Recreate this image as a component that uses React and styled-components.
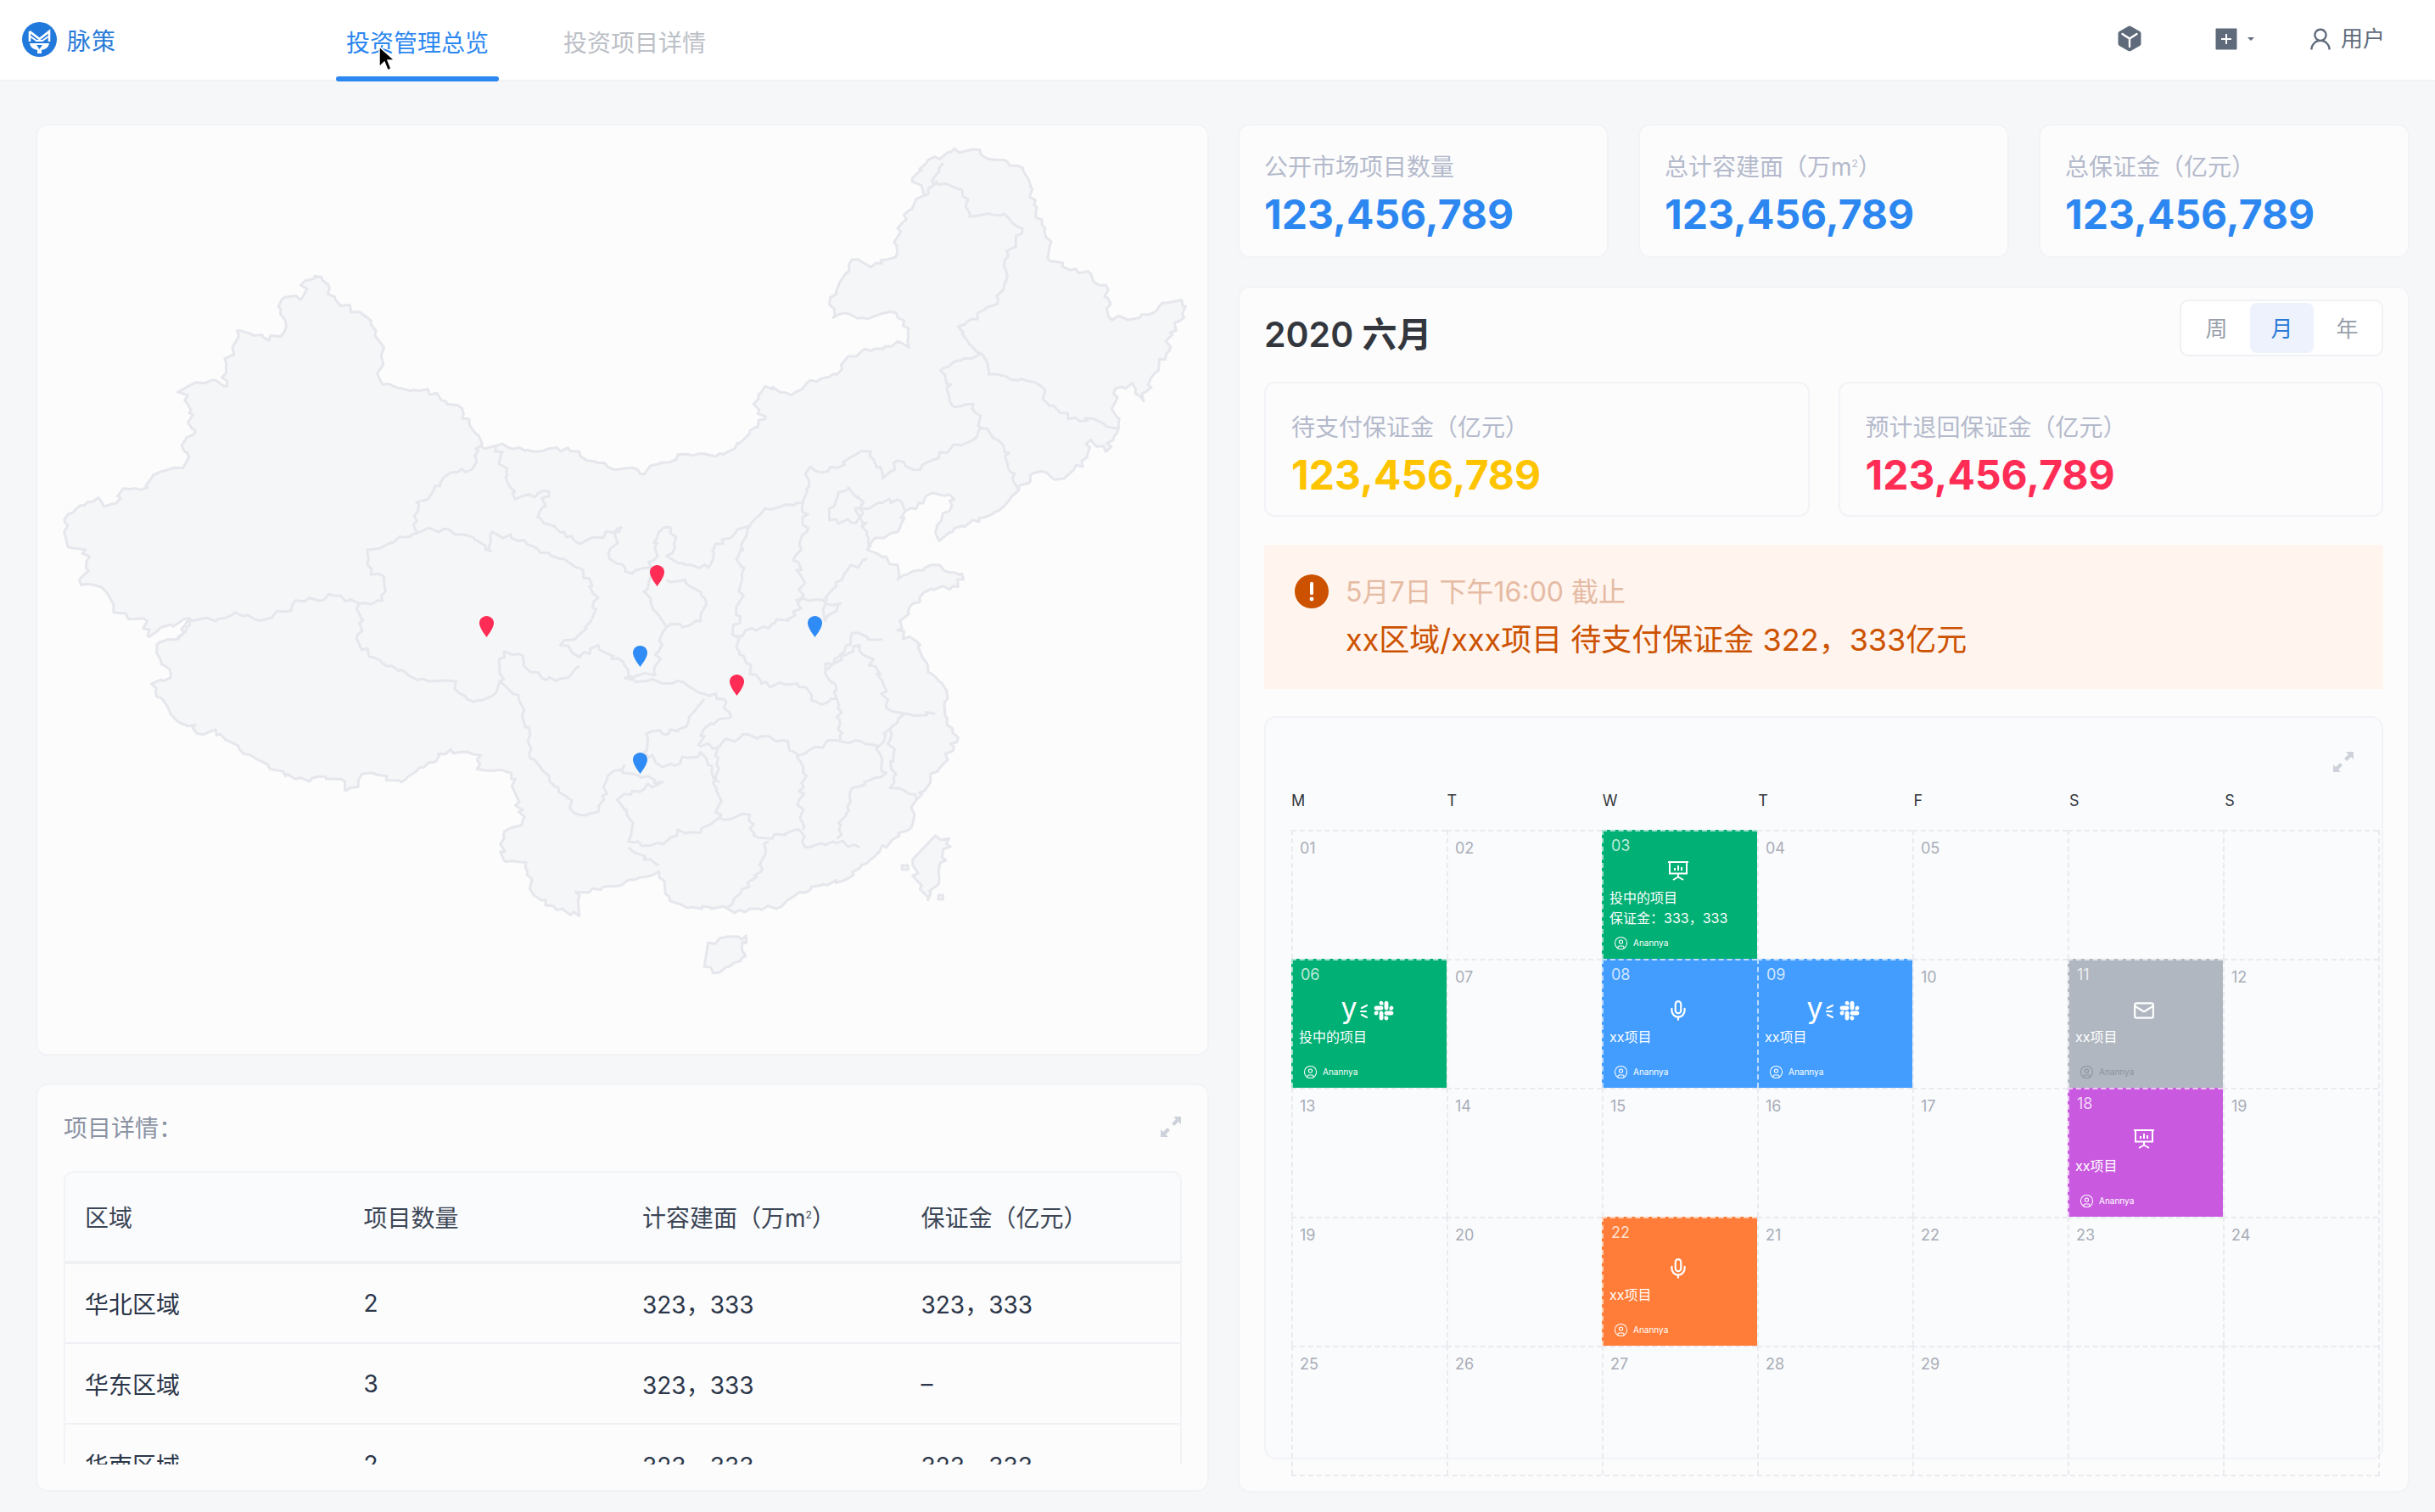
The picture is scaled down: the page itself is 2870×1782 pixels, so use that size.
import { createGlobalStyle } from "styled-components";
import styled from "styled-components";
import { Mic, Mail, CircleUser } from "lucide-react";
import { FaSlack } from "react-icons/fa";
import { AiOutlineUser, AiFillPlusSquare } from "react-icons/ai";

const GlobalStyle = createGlobalStyle`
    html, body {
        margin: 0;
        padding: 0;
        background: #f6f7f9;
        font-family: Inter, "Noto Sans CJK SC", sans-serif;
    }
    * {
        box-sizing: border-box;
    }
`;

const Page = styled.div`
    width: 2870px;
    height: 1782px;
    position: relative;
    overflow: hidden;
    background: #f6f7f9;
`;

const Nav = styled.header`
    height: 94px;
    display: flex;
    align-items: center;
    background: #fff;
    box-shadow: 0 1px 3px rgba(30, 40, 60, 0.04);
    padding-left: 26px;
    padding-right: 59px;
`;

const Brand = styled.div`
    display: flex;
    align-items: center;
    gap: 12px;
    width: 370px;
    margin-top: -1px;
    color: #2a7bd8;
    font-size: 28px;
    letter-spacing: 1px;
`;

const Tabs = styled.nav`
    display: flex;
    gap: 64px;
    height: 94px;
`;

const Tab = styled.div`
    width: 192px;
    position: relative;
    display: flex;
    align-items: center;
    justify-content: center;
    padding-top: 4px;
    font-size: 28px;
    color: ${(p) => (p.$active ? "#2d87f0" : "#bcc0c7")};
    &::after {
        content: "";
        display: ${(p) => (p.$active ? "block" : "none")};
        position: absolute;
        left: 0;
        right: 0;
        bottom: -2px;
        height: 6px;
        border-radius: 3px;
        background: #2d87f0;
    }
`;

const NavRight = styled.div`
    margin-left: auto;
    margin-top: -3px;
    display: flex;
    align-items: center;
    color: #5f6b7a;
`;

const CubeBox = styled.div`
    display: flex;
    margin-right: 84px;
`;

const AddBox = styled.div`
    display: flex;
    align-items: center;
    gap: 9px;
    margin-right: 62px;
`;

const Caret = styled.span`
    width: 0;
    height: 0;
    border-left: 4px solid transparent;
    border-right: 4px solid transparent;
    border-top: 4px solid #5f6b7a;
`;

const UserBox = styled.div`
    display: flex;
    align-items: center;
    gap: 8px;
    font-size: 26px;
    line-height: 30px;
`;

const Main = styled.main`
    display: grid;
    grid-template-columns: 1383px 1381px;
    gap: 34px;
    padding: 52px 0 0 42px;
`;

const Column = styled.div`
    display: flex;
    flex-direction: column;
    gap: 33px;
`;

const Panel = styled.section`
    background: #fcfcfd;
    border: 2px solid #f2f3f6;
    border-radius: 14px;
`;

const MapPanel = styled(Panel)`
    height: 1098px;
    position: relative;
`;

const MapDrawing = styled.svg`
    display: block;
    position: absolute;
    left: -4px;
    top: 2px;
    width: 1400px;
    height: 1100px;
`;

const PinMark = styled.svg`
    position: absolute;
    width: 17px;
    height: 25px;
    left: ${(p) => p.$x - 42 - 10}px;
    top: ${(p) => p.$y - 146 - 14}px;
    fill: ${(p) => (p.$red ? "#ff2d55" : "#2f8bf5")};
`;

const DetailPanel = styled(Panel)`
    height: 481px;
    padding: 0 30px 0 31px;
`;

const DetailHead = styled.div`
    height: 101px;
    display: flex;
    align-items: center;
    justify-content: space-between;
    padding-bottom: 3px;
    font-size: 28px;
    color: #8b93a3;
`;

const TableClip = styled.div`
    height: 346px;
    overflow: hidden;
    border: 2px solid #f2f3f6;
    border-bottom: 0;
    border-radius: 12px 12px 0 0;
`;

const Table = styled.table`
    width: 100%;
    border-collapse: collapse;
    table-layout: fixed;
    font-size: 28px;
`;

const HeadCell = styled.th`
    height: 106px;
    padding: 0 0 0 23px;
    text-align: left;
    font-weight: 400;
    color: #3c4656;
    background: #fafbfc;
    border-bottom: 4px solid #eff0f3;
`;

const BodyCell = styled.td`
    height: 95px;
    padding: 0 0 0 23px;
    color: #2b3648;
    border-bottom: 2px solid #eff0f3;
`;

const Sup = styled.sup`
    font-size: 12px;
    line-height: 0;
`;

const KpiRow = styled.div`
    display: grid;
    grid-template-columns: repeat(3, 1fr);
    gap: 35px;
`;

const KpiCard = styled(Panel)`
    height: 158px;
    padding: 28px 29px 0;
`;

const KpiLabel = styled.div`
    font-size: 28px;
    line-height: 42px;
    color: #b4bacb;
`;

const KpiValue = styled.div`
    font-size: 48px;
    line-height: 60px;
    font-weight: 700;
    margin-top: 5px;
    color: ${(p) => p.$color};
`;

const CalendarPanel = styled(Panel)`
    height: 1422px;
    padding: 13px 29px 0 29px;
`;

const CalendarHead = styled.div`
    display: flex;
    align-items: center;
    justify-content: space-between;
    height: 68px;
`;

const CalendarTitle = styled.h2`
    margin: 10px 0 0;
    font-size: 41px;
    font-weight: 600;
    color: #33373d;
`;

const Segment = styled.div`
    display: flex;
    align-items: center;
    gap: 2px;
    height: 67px;
    padding: 0 3px 0 4px;
    border: 2px solid #f0f1f5;
    border-radius: 10px;
    background: #fff;
`;

const SegmentItem = styled.div`
    width: 75px;
    height: 59px;
    display: flex;
    align-items: center;
    justify-content: center;
    padding-bottom: 2px;
    border-radius: 8px;
    font-size: 26px;
    background: ${(p) => (p.$active ? "#eef2fc" : "transparent")};
    color: ${(p) => (p.$active ? "#2a7bd8" : "#9aa0ab")};
`;

const StatRow = styled.div`
    display: grid;
    grid-template-columns: 1fr 1fr;
    gap: 34px;
    margin-top: 30px;
`;

const StatCard = styled.div`
    height: 159px;
    padding: 31px 30px 0;
    border: 2px solid #f2f3f6;
    border-radius: 12px;
`;

const Alert = styled.div`
    height: 170px;
    margin-top: 33px;
    padding: 35px 36px 0;
    display: grid;
    grid-template-columns: 40px 1fr;
    grid-template-rows: 42px 1fr;
    column-gap: 20px;
    background: #fff4ee;
`;

const AlertTime = styled.div`
    font-size: 32px;
    line-height: 42px;
    color: #e5bba3;
`;

const AlertText = styled.div`
    grid-column: 2;
    margin-top: -1px;
    padding-top: 11px;
    font-size: 36px;
    line-height: 50px;
    color: #cc5200;
`;

const CalendarBox = styled.div`
    height: 876px;
    margin-top: 32px;
    padding: 39px 0 0 30px;
    background: #fafbfc;
    border: 2px solid #f2f3f6;
    border-radius: 14px;
`;

const CalendarTools = styled.div`
    display: flex;
    justify-content: flex-end;
    padding-right: 32px;
    height: 26px;
`;

const WeekRow = styled.div`
    display: grid;
    grid-template-columns: repeat(7, 183.4px);
    margin-top: 22px;
    font-size: 18px;
    line-height: 22px;
    color: #33373d;
`;

const DayGrid = styled.div`
    display: grid;
    grid-template-columns: repeat(7, 183px);
    grid-auto-rows: 152px;
    width: 1283px;
    margin-top: 23px;
    border-right: 2px dashed #e9ebf0;
    border-bottom: 2px dashed #e9ebf0;
`;

const Day = styled.div`
    position: relative;
    padding: 8px 8px 0;
    font-size: 18px;
    line-height: 24px;
    color: #a8adb8;
    border-top: 2px dashed #e9ebf0;
    border-left: 2px dashed #e9ebf0;
`;

const Tile = styled.div`
    display: flex;
    flex-direction: column;
    padding: 5px 0 0;
    color: #fff;
    font-size: 16px;
    background: ${(p) => p.$bg};
    border-top: 2px dashed rgba(255, 255, 255, 0.65);
    border-left: 2px dashed rgba(255, 255, 255, 0.65);
`;

const TileDate = styled.div`
    padding-left: 9px;
    font-size: 18px;
    line-height: 24px;
    color: rgba(255, 255, 255, 0.75);
`;

const TileBody = styled.div`
    flex: 1;
    display: flex;
    flex-direction: column;
    justify-content: center;
`;

const TileIcons = styled.div`
    height: 26px;
    display: flex;
    align-items: center;
    justify-content: center;
    gap: 6px;
    margin-bottom: 6px;
    margin-right: 5px;
`;

const TileLine = styled.div`
    padding-left: 7px;
    line-height: 24px;
    white-space: nowrap;
`;

const TileFoot = styled.div`
    height: 26px;
    margin-bottom: 6px;
    padding-left: 12px;
    display: flex;
    align-items: center;
    gap: 6px;
    font-size: 10px;
    color: ${(p) => (p.$dim ? "#8d939c" : "#fff")};
`;

const YLetter = styled.span`
    font-size: 34px;
    line-height: 26px;
    font-weight: 400;
    margin-top: -6px;
`;

const YammerMark = styled.span`
    display: flex;
    align-items: center;
`;

const Cursor = styled.svg`
    position: absolute;
    left: 445px;
    top: 54px;
    width: 22px;
    height: 32px;
`;

// map data: points traced off the picture, viewBox units
const outline = "40,680 45,650 70,630 85,622 92,637 108,632 118,607 150,605 155,590 185,572 200,565 200,525 212,515 205,480 203,450 190,445 225,430 240,425 255,435 248,420 262,370 268,342 290,350 310,358 330,345 327,290 355,285 358,258 380,252 388,280 405,300 430,310 445,325 450,350 462,370 455,410 460,432 480,438 520,440 545,465 565,472 575,500 590,535 610,535 660,545 690,538 720,545 730,560 770,575 790,572 800,582 850,550 905,548 925,540 945,510 965,490 950,465 965,435 1000,450 1025,425 1060,415 1075,385 1110,372 1145,362 1155,370 1155,338 1130,310 1100,322 1070,312 1055,320 1050,298 1060,280 1080,222 1105,235 1140,210 1140,170 1165,120 1175,115 1160,85 1180,55 1210,42 1240,37 1270,55 1300,65 1315,100 1320,130 1335,170 1342,225 1375,238 1415,265 1420,320 1460,320 1490,295 1515,290 1518,320 1500,345 1495,380 1475,420 1465,460 1450,430 1425,448 1432,505 1415,545 1395,525 1390,555 1360,590 1330,578 1300,610 1265,650 1225,670 1195,695 1190,680 1215,625 1190,615 1150,645 1140,680 1110,690 1100,710 1120,722 1140,735 1140,760 1185,735 1225,750 1220,772 1185,775 1160,800 1140,845 1170,870 1180,915 1205,950 1205,1000 1220,1025 1200,1070 1165,1130 1155,1180 1110,1225 1090,1245 1070,1265 1010,1285 985,1310 925,1320 905,1310 870,1310 840,1300 825,1250 800,1260 760,1275 715,1285 720,1325 690,1315 660,1290 650,1235 620,1230 620,1190 645,1165 630,1085 612,1080 585,1078 590,1055 550,1045 515,1075 485,1100 440,1085 412,1115 405,1095 345,1095 300,1065 275,1050 240,1012 225,1020 180,985 155,935 180,925 162,870 190,860 205,825 150,855 145,825 105,815 95,780 60,760 72,745 68,710 45,705";

const islands = [
    "1190,1190 1208,1195 1195,1260 1180,1298 1165,1265 1160,1230",
    "890,1370 940,1358 935,1395 905,1420 885,1410",
    "1050,640 1075,605 1095,630 1085,665 1050,660",
    "1146,1240 1154,1240 1154,1247 1146,1247",
    "1194,1290 1200,1290 1200,1297 1194,1297",
];

const borders = [
    "190,860 205,825 240,830 265,815 295,828 340,812 345,795 395,787 430,800 460,795 462,765 440,735 440,710 510,680 540,675 570,685 603,712 605,680 640,695 680,715 720,740 745,790 735,830 715,860 695,870 720,890 745,870 780,905 790,925",
    "590,535 583,540 578,575 550,580 520,625 505,630 505,680",
    "610,535 625,585 635,625 680,612 665,655 700,680 720,700 775,672 760,725 790,750 815,740 825,680 840,672 845,700 835,720 860,735 890,740 900,700 945,670 930,720 935,760 930,800 925,855 940,900 960,935 1010,940 1040,970 1060,960 1045,910 1070,880 1080,850 1120,860",
    "945,670 965,640 1015,630 1025,570 1040,580 1085,550 1105,545 1120,590 1140,560 1160,575 1210,540 1245,520 1250,505 1280,535 1300,610",
    "1175,115 1200,60",
    "1190,90 1225,105 1235,150 1280,145 1305,170 1285,210 1285,250 1265,300 1220,335 1235,365 1250,380 1200,405 1215,470 1240,465 1250,505",
    "1250,380 1260,415 1300,425 1330,435 1335,460 1365,490 1400,490 1432,505",
    "1015,630 1020,680 1005,720 1015,770 1005,820 925,855",
    "1005,795 1045,800 1065,800 1045,830 1045,790 1070,750 1100,725",
    "1100,710 1100,680 1085,640 1140,625 1150,645",
    "815,740 805,780 830,830 835,840 880,830 885,790 860,760 835,760",
    "835,840 825,880 820,920 780,925 810,930 850,930 880,950 910,960 920,990 885,1010 880,1040 905,1040",
    "620,880 640,885 655,915 690,930 720,905",
    "615,930 640,960 655,1020 655,1060 680,1090 720,1155 745,1150 755,1100 780,1070",
    "430,800 430,870 465,905 520,930 550,930 580,965 610,950 615,930 620,880",
    "775,1080 810,1090 830,1100 790,1115 770,1130 790,1175 785,1200 830,1205 850,1180 880,1185 905,1160 945,1155 950,1190 975,1195 1010,1180 1020,1210 1055,1200 1090,1210",
    "805,1050 815,1015 850,1015 865,990 885,960",
    "805,1050 830,1075 880,1050 895,1085 905,1100",
    "905,1040 935,1020 990,1030 1010,1055 1060,1030 1085,1030 1115,1040 1130,1010 1150,985",
    "905,1040 900,1090 905,1160",
    "1010,1055 1020,1090 1010,1130 1015,1180",
    "1115,1040 1125,1085 1080,1110 1060,1195",
    "1130,1010 1135,1090 1130,1110 1150,1115 1165,1130",
    "1045,910 1090,870 1120,930 1125,975 1150,985 1190,985",
    "1060,960 1065,1030",
    "970,1200 960,1250 935,1280 915,1310",
    "785,1210 825,1240",
];

// breaks each straight stretch into small jogs so the lines read like a real border
function roughen(text) {
    const pts = text.split(" ").map((p) => p.split(",").map(Number));
    let seed = pts.length * 7 + 3;
    const next = () => {
        seed = (seed * 16807) % 2147483647;
        return (seed % 1000) / 1000 - 0.5;
    };
    const out = [];
    pts.forEach((p, i) => {
        out.push(p);
        const q = pts[i + 1];
        if (!q) return;
        const len = Math.hypot(q[0] - p[0], q[1] - p[1]);
        const steps = Math.floor(len / 7);
        for (let s = 1; s < steps; s++) {
            const t = s / steps;
            out.push([p[0] + (q[0] - p[0]) * t + next() * 10, p[1] + (q[1] - p[1]) * t + next() * 10]);
        }
    });
    return out.map((p) => `${p[0].toFixed(1)},${p[1].toFixed(1)}`).join(" ");
}

const pins = [
    { x: 573, y: 738, red: true },
    { x: 774, y: 678, red: true },
    { x: 868, y: 807, red: true },
    { x: 960, y: 738 },
    { x: 754, y: 773 },
    { x: 754, y: 899 },
];

function ChinaMap() {
    return (
        <MapDrawing viewBox="0 0 1568 1568" preserveAspectRatio="none">
            <g fill="#f5f6f8" stroke="#e6e7ec" strokeWidth="3" strokeLinejoin="round">
                <polygon points={roughen(outline)} vectorEffect="non-scaling-stroke" />
                {islands.map((p) => (
                    <polygon key={p} points={roughen(p)} vectorEffect="non-scaling-stroke" />
                ))}
            </g>
            <g fill="none" stroke="#e6e7ec" strokeWidth="3" strokeLinejoin="round">
                {borders.map((p) => (
                    <polyline key={p} points={roughen(p)} vectorEffect="non-scaling-stroke" />
                ))}
            </g>
        </MapDrawing>
    );
}

function Pin({ x, y, red }) {
    return (
        <PinMark $x={x} $y={y} $red={red} viewBox="0 0 17 25">
            <path d="M8.5 0C13.2 0 17 3.6 17 8.3c0 5-5 12-8.5 16.7C5 20.3 0 13.3 0 8.3 0 3.6 3.8 0 8.5 0z" />
        </PinMark>
    );
}

function Logo() {
    return (
        <svg width="41" height="41" viewBox="0 0 41 41">
            <circle cx="20.5" cy="20.5" r="20.5" fill="#2279dc" />
            <path d="M9 11l11.500 9L32 11v12" fill="none" stroke="#fff" strokeWidth="2.600" />
            <path d="M9 11v12" fill="none" stroke="#fff" strokeWidth="2.600" />
            <path d="M10 17l7 5h7l7-5" fill="none" stroke="#fff" strokeWidth="2" />
            <path d="M9 25h23c-1 5-4 7-9 8v4h-5v-4c-5-1-8-3-9-8z" fill="#fff" />
            <path d="M17 27h7l-3.500 5z" fill="#2279dc" />
        </svg>
    );
}

function CubeIcon() {
    return (
        <svg width="28" height="31" viewBox="0 0 28 31">
            <path d="M12.5 1a3 3 0 0 1 3 0l10.500 6a3 3 0 0 1 1.500 2.600v11.800a3 3 0 0 1-1.500 2.600l-10.500 6a3 3 0 0 1-3 0l-10.500-6a3 3 0 0 1-1.500-2.600V9.600a3 3 0 0 1 1.500-2.600z" fill="#5f6b7a" />
            <path d="M5.500 10l8.500 5.500 8.500-5.500M14 15.500V25" fill="none" stroke="#fff" strokeWidth="2.400" strokeLinecap="round" />
        </svg>
    );
}

function ExpandIcon() {
    return (
        <svg width="26" height="26" viewBox="0 0 26 26" fill="#cdd2da">
            <path d="M16 1h9v9l-3-3-5 5-3-3 5-5zM10 25H1v-9l3 3 5-5 3 3-5 5z" />
        </svg>
    );
}

function AlertIcon() {
    return (
        <svg width="40" height="40" viewBox="0 0 40 40">
            <circle cx="20" cy="20" r="20" fill="#cc5200" />
            <rect x="18" y="9" width="4" height="15" rx="1.500" fill="#fff" />
            <circle cx="20" cy="29" r="2.400" fill="#fff" />
        </svg>
    );
}

function BoardIcon() {
    return (
        <svg width="24" height="25" viewBox="0 0 24 25" fill="none" stroke="#fff">
            <path d="M0 2h24" strokeWidth="2" />
            <path d="M2 2v13.500h20V2" strokeWidth="2" />
            <path d="M8 12V9M12 12V6M16 12V8" strokeWidth="2" />
            <path d="M12 16v4M12 19.500l-6 3.500M12 19.500l6 3.500" strokeWidth="2" />
        </svg>
    );
}

function YammerIcon() {
    return (
        <YammerMark>
            <YLetter>y</YLetter>
            <svg width="12" height="22" viewBox="0 0 12 22" fill="none" stroke="#fff" strokeWidth="2.200" strokeLinecap="round">
                <path d="M5 8l6-3M4 12h6M5 16l6 3" />
            </svg>
        </YammerMark>
    );
}

const tileColors = {
    green: "#00b074",
    blue: "#429dff",
    grey: "#b0b7c0",
    purple: "#c95ae0",
    orange: "#ff7d38",
};

const weeks = [
    [
        { day: "01" }, { day: "02" },
        { day: "03", color: "green", icon: "board", lines: ["投中的项目", "保证金：333，333"] },
        { day: "04" }, { day: "05" }, { day: "" }, { day: "" },
    ],
    [
        { day: "06", color: "green", icon: "apps", lines: ["投中的项目"] },
        { day: "07" },
        { day: "08", color: "blue", icon: "mic", lines: ["xx项目"] },
        { day: "09", color: "blue", icon: "apps", lines: ["xx项目"] },
        { day: "10" },
        { day: "11", color: "grey", icon: "mail", lines: ["xx项目"] },
        { day: "12" },
    ],
    [
        { day: "13" }, { day: "14" }, { day: "15" }, { day: "16" }, { day: "17" },
        { day: "18", color: "purple", icon: "board", lines: ["xx项目"] },
        { day: "19" },
    ],
    [
        { day: "19" }, { day: "20" },
        { day: "22", color: "orange", icon: "mic", lines: ["xx项目"] },
        { day: "21" }, { day: "22" }, { day: "23" }, { day: "24" },
    ],
    [
        { day: "25" }, { day: "26" }, { day: "27" }, { day: "28" }, { day: "29" }, { day: "" }, { day: "" },
    ],
];

function TileIcon({ name }) {
    if (name === "board") return <BoardIcon />;
    if (name === "mic") return <Mic size={26} strokeWidth={2} />;
    if (name === "mail") return <Mail size={26} strokeWidth={2} />;
    return (
        <>
            <YammerIcon />
            <FaSlack size={26} />
        </>
    );
}

function CalendarCell({ cell }) {
    if (!cell.color) return <Day>{cell.day}</Day>;
    return (
        <Tile $bg={tileColors[cell.color]}>
            <TileDate>{cell.day}</TileDate>
            <TileBody>
                <TileIcons>
                    <TileIcon name={cell.icon} />
                </TileIcons>
                {cell.lines.map((line) => (
                    <TileLine key={line}>{line}</TileLine>
                ))}
            </TileBody>
            <TileFoot $dim={cell.color === "grey"}>
                <CircleUser size={17} strokeWidth={1.5} />
                Anannya
            </TileFoot>
        </Tile>
    );
}

const rows = [
    ["华北区域", "2", "323，333", "323，333"],
    ["华东区域", "3", "323，333", "–"],
    ["华南区域", "2", "323，333", "323，333"],
];

export default function App() {
    return (
        <Page>
            <GlobalStyle />
            <Nav>
                <Brand>
                    <Logo />
                    脉策
                </Brand>
                <Tabs>
                    <Tab $active>投资管理总览</Tab>
                    <Tab>投资项目详情</Tab>
                </Tabs>
                <NavRight>
                    <CubeBox>
                        <CubeIcon />
                    </CubeBox>
                    <AddBox>
                        <AiFillPlusSquare size={32} />
                        <Caret />
                    </AddBox>
                    <UserBox>
                        <AiOutlineUser size={32} />
                        用户
                    </UserBox>
                </NavRight>
            </Nav>
            <Main>
                <Column>
                    <MapPanel>
                        <ChinaMap />
                        {pins.map((p) => (
                            <Pin key={`${p.x}-${p.y}`} x={p.x} y={p.y} red={p.red} />
                        ))}
                    </MapPanel>
                    <DetailPanel>
                        <DetailHead>
                            项目详情：
                            <ExpandIcon />
                        </DetailHead>
                        <TableClip>
                            <Table>
                                <thead>
                                    <tr>
                                        <HeadCell>区域</HeadCell>
                                        <HeadCell>项目数量</HeadCell>
                                        <HeadCell>计容建面（万m<Sup>2</Sup>）</HeadCell>
                                        <HeadCell>保证金（亿元）</HeadCell>
                                    </tr>
                                </thead>
                                <tbody>
                                    {rows.map((row) => (
                                        <tr key={row[0]}>
                                            {row.map((text, i) => (
                                                <BodyCell key={i}>{text}</BodyCell>
                                            ))}
                                        </tr>
                                    ))}
                                </tbody>
                            </Table>
                        </TableClip>
                    </DetailPanel>
                </Column>
                <Column>
                    <KpiRow>
                        <KpiCard>
                            <KpiLabel>公开市场项目数量</KpiLabel>
                            <KpiValue $color="#2d87f0">123,456,789</KpiValue>
                        </KpiCard>
                        <KpiCard>
                            <KpiLabel>总计容建面（万m<Sup>2</Sup>）</KpiLabel>
                            <KpiValue $color="#2d87f0">123,456,789</KpiValue>
                        </KpiCard>
                        <KpiCard>
                            <KpiLabel>总保证金（亿元）</KpiLabel>
                            <KpiValue $color="#2d87f0">123,456,789</KpiValue>
                        </KpiCard>
                    </KpiRow>
                    <CalendarPanel>
                        <CalendarHead>
                            <CalendarTitle>2020 六月</CalendarTitle>
                            <Segment>
                                <SegmentItem>周</SegmentItem>
                                <SegmentItem $active>月</SegmentItem>
                                <SegmentItem>年</SegmentItem>
                            </Segment>
                        </CalendarHead>
                        <StatRow>
                            <StatCard>
                                <KpiLabel>待支付保证金（亿元）</KpiLabel>
                                <KpiValue $color="#ffc400">123,456,789</KpiValue>
                            </StatCard>
                            <StatCard>
                                <KpiLabel>预计退回保证金（亿元）</KpiLabel>
                                <KpiValue $color="#ff2d55">123,456,789</KpiValue>
                            </StatCard>
                        </StatRow>
                        <Alert>
                            <AlertIcon />
                            <AlertTime>5月7日 下午16:00 截止</AlertTime>
                            <AlertText>xx区域/xxx项目 待支付保证金 322，333亿元</AlertText>
                        </Alert>
                        <CalendarBox>
                            <CalendarTools>
                                <ExpandIcon />
                            </CalendarTools>
                            <WeekRow>
                                {["M", "T", "W", "T", "F", "S", "S"].map((d, i) => (
                                    <div key={i}>{d}</div>
                                ))}
                            </WeekRow>
                            <DayGrid>
                                {weeks.flat().map((cell, i) => (
                                    <CalendarCell key={i} cell={cell} />
                                ))}
                            </DayGrid>
                        </CalendarBox>
                    </CalendarPanel>
                </Column>
            </Main>
            <Cursor viewBox="0 0 22 32">
                <path d="M2 1v24l6-6 4 10 4-2-4-10h8z" fill="#000" stroke="#fff" strokeWidth="1.500" />
            </Cursor>
        </Page>
    );
}
